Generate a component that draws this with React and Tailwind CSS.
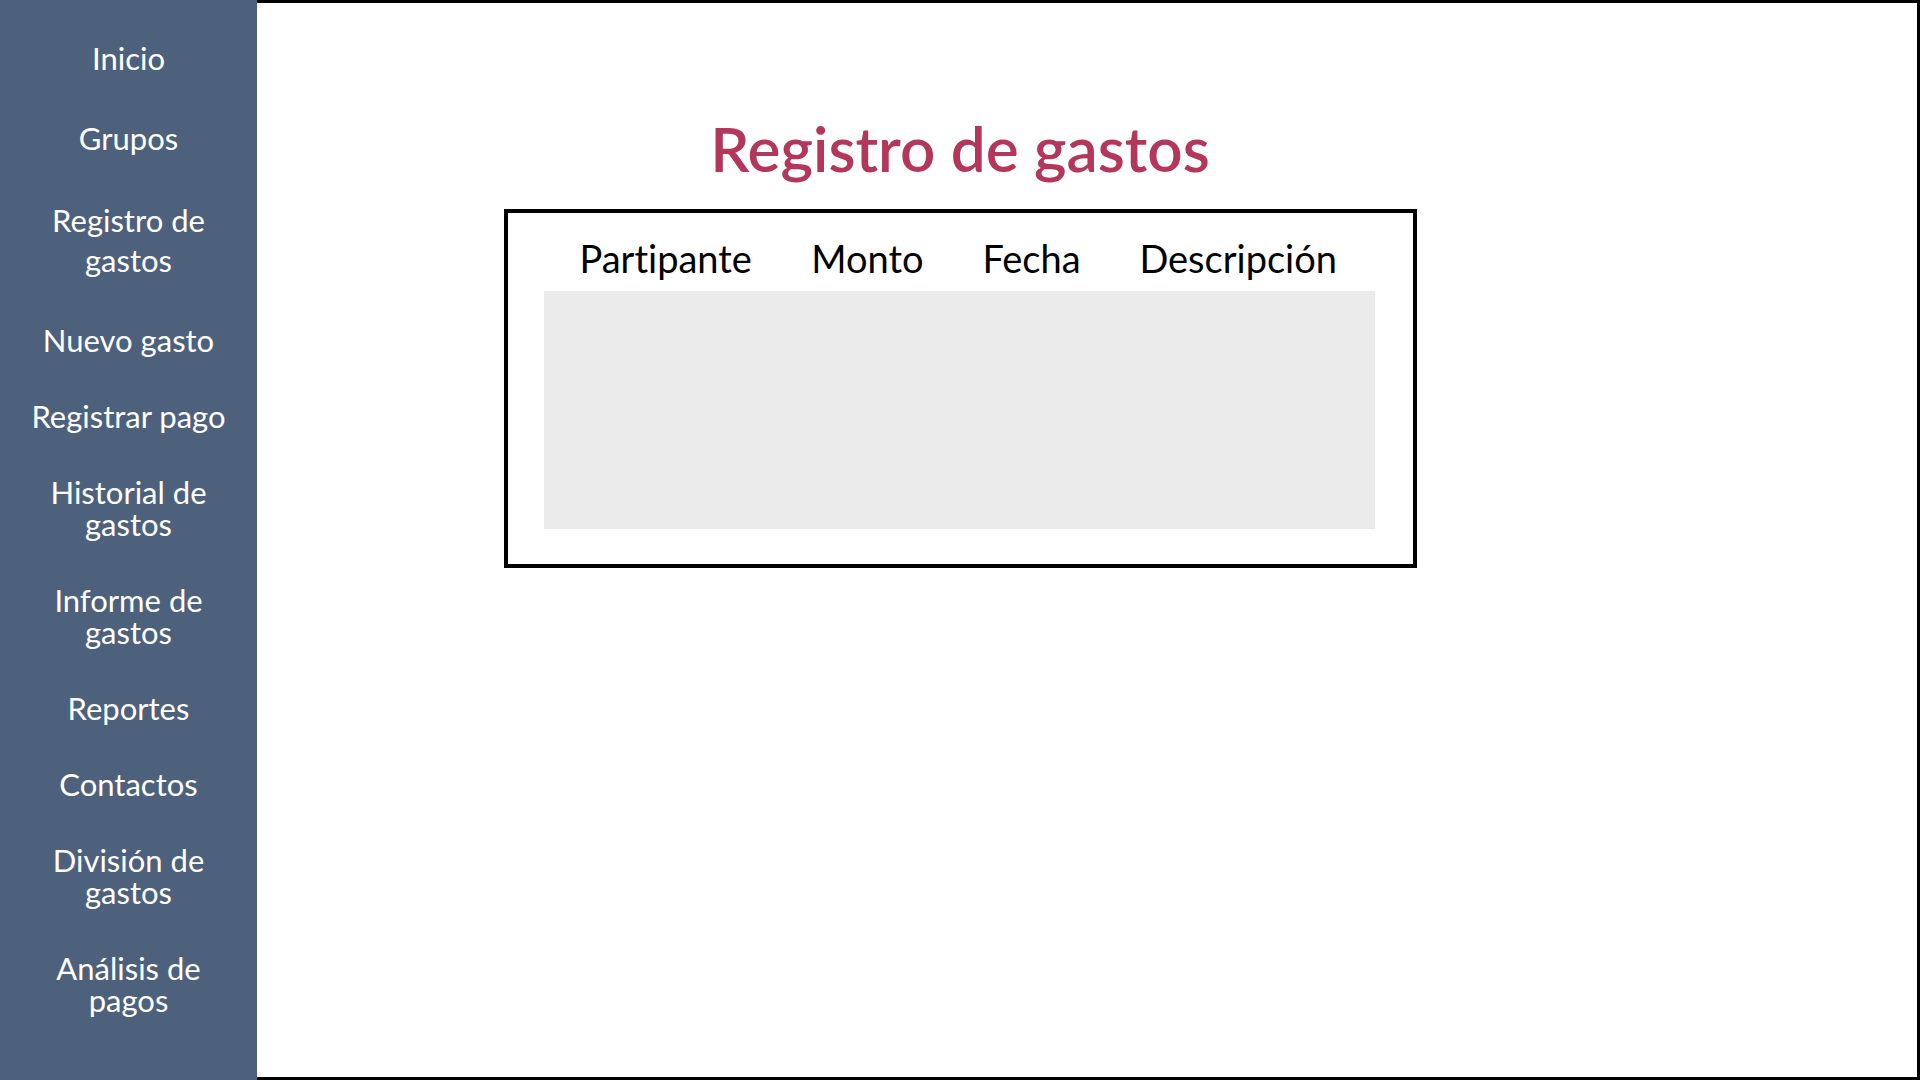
const links = [
  { label: "Inicio", leading: "leading-9" },
  { label: "Grupos", leading: "leading-9" },
  { label: "Registro de gastos", leading: "leading-10" },
  { label: "Nuevo gasto", leading: "leading-8" },
  { label: "Registrar pago", leading: "leading-8" },
  { label: "Historial de gastos", leading: "leading-8" },
  { label: "Informe de gastos", leading: "leading-8" },
  { label: "Reportes", leading: "leading-8" },
  { label: "Contactos", leading: "leading-8" },
  { label: "División de gastos", leading: "leading-8" },
  { label: "Análisis de pagos", leading: "leading-8" },
];

const columns = ["Partipante", "Monto", "Fecha", "Descripción"];

function Sidebar() {
  return (
    <nav className="flex w-[257px] shrink-0 flex-col items-center gap-11 bg-[#4e617c] px-6 pt-10 text-center text-[31px] text-white">
      {links.map(({ label, leading }) => (
        <a key={label} href="#" className={leading}>
          {label}
        </a>
      ))}
    </nav>
  );
}

function ExpenseTable() {
  return (
    <div className="border-4 border-black pt-4 pr-[38px] pb-[35px] pl-9">
      <table className="min-w-[831px] border-collapse">
        <thead>
          <tr>
            {columns.map((name) => (
              <th key={name} scope="col" className="h-[62px] px-[29px] pb-1 text-left text-[38px] leading-[56px] font-normal first:pl-9 last:pr-9">
                {name}
              </th>
            ))}
          </tr>
        </thead>
        <tbody>
          <tr>
            <td colSpan={4} className="h-[238px] bg-[#ebebeb]" />
          </tr>
        </tbody>
      </table>
    </div>
  );
}

export default function App() {
  return (
    <div className="flex min-h-screen bg-white font-['Lato',sans-serif] text-black [font-variant-ligatures:none]">
      <Sidebar />
      <main className="flex flex-1 flex-col items-center border-y-3 border-r-3 border-black pt-[107px] pr-[254px]">
        <h1 className="mb-[23px] text-[62px] leading-[76px] font-semibold text-[#b3375a]">Registro de gastos</h1>
        <ExpenseTable />
      </main>
    </div>
  );
}
